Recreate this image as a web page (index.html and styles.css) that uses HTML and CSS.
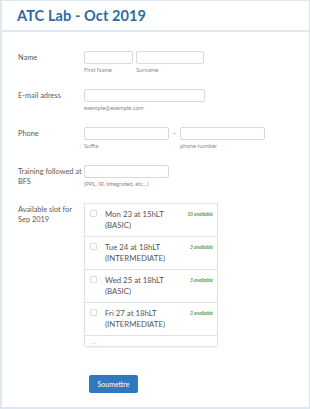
FILE: index.html
```html
<!DOCTYPE html>
<html>
<head>
<meta charset="utf-8">
<link rel="stylesheet" href="styles.css">
</head>
<body>
<div class="card">
  <header class="head"><h1 class="title">ATC Lab - Oct 2019</h1></header>
  <form class="form">
    <div class="row">
      <div class="label">Name</div>
      <div class="field">
        <div class="pair">
          <div class="sub-col"><div class="input w49"></div><div class="hint">First Name</div></div>
          <div class="sub-col"><div class="input w67"></div><div class="hint">Surname</div></div>
        </div>
      </div>
    </div>
    <div class="row">
      <div class="label">E-mail adress</div>
      <div class="field">
        <div class="input w121"></div>
        <div class="hint">exemple@exemple.com</div>
      </div>
    </div>
    <div class="row">
      <div class="label">Phone</div>
      <div class="field">
        <div class="pair">
          <div class="sub-col"><div class="input w85"></div><div class="hint">Suffix</div></div>
          <div class="dash">-</div>
          <div class="sub-col"><div class="input w85"></div><div class="hint">phone number</div></div>
        </div>
      </div>
    </div>
    <div class="row">
      <div class="label">Training followed at BFS</div>
      <div class="field">
        <div class="input w85"></div>
        <div class="hint">(PPL, IR, Integrated, etc...)</div>
      </div>
    </div>
    <div class="row">
      <div class="label">Available slot for Sep 2019</div>
      <div class="field">
        <div class="slots-wrap">
          <div class="slots">
            <div class="slot"><span class="box"></span><span class="slot-text">Mon 23 at 15hLT<br>(BASIC)</span><span class="avail">10 available</span></div>
            <div class="slot"><span class="box"></span><span class="slot-text">Tue 24 at 18hLT<br>(INTERMEDIATE)</span><span class="avail">3 available</span></div>
            <div class="slot"><span class="box"></span><span class="slot-text">Wed 25 at 18hLT<br>(BASIC)</span><span class="avail">3 available</span></div>
            <div class="slot"><span class="box"></span><span class="slot-text">Fri 27 at 18hLT<br>(INTERMEDIATE)</span><span class="avail">3 available</span></div>
            <div class="slot slot-last"><span class="box"></span><span class="slot-text"></span><span class="avail">4 available</span></div>
          </div>
        </div>
      </div>
    </div>
    <div class="actions">
      <button type="button" class="submit">Soumettre</button>
    </div>
  </form>
</div>
</body>
</html>
```
FILE: styles.css
```css
html, body {
  margin: 0;
  padding: 0;
}
body {
  background: #dfe8f1;
  font-family: Lato, "Open Sans", sans-serif;
  height: 409px;
  overflow: hidden;
  padding: 1px 1px 2px 2px;
  box-sizing: border-box;
}
.card {
  background: #fff;
  height: 406px;
  box-sizing: border-box;
}
.head {
  height: 29px;
  border-bottom: 2px solid #dde7f1;
  padding-left: 15px;
  display: flex;
  align-items: center;
}
.title {
  margin: 0;
  font-size: 14.5px;
  font-weight: 700;
  color: #2e6ba6;
  letter-spacing: 0.1px;
}
.form {
  padding: 19px 0 0 16px;
}
.row {
  display: flex;
  margin-bottom: 14px;
}
.label {
  width: 66px;
  flex: none;
  font-size: 7.4px;
  line-height: 9.5px;
  color: #5c5c5c;
  padding-top: 2px;
}
.field {
  flex: none;
}
.pair {
  display: flex;
  align-items: flex-start;
  gap: 3px;
}
.input {
  height: 13px;
  box-sizing: border-box;
  border: 1px solid #d9d9d9;
  border-radius: 2px;
  background: #fff;
}
.w49 { width: 49px; }
.w67 { width: 68px; }
.w85 { width: 85px; }
.w121 { width: 121px; }
.dash {
  width: 5px;
  font-size: 7px;
  line-height: 13px;
  color: #888;
  text-align: center;
}
.hint {
  font-size: 5.8px;
  line-height: 7px;
  color: #8a8a8a;
  margin-top: 2px;
  height: 9px;
}
.slots-wrap {
  position: relative;
  width: 134px;
  box-shadow: 0 2px 2px -1px rgba(0,0,0,0.15);
}
.slots-wrap::after {
  content: "";
  position: absolute;
  left: 1px;
  right: 1px;
  bottom: 0;
  height: 4px;
  background: linear-gradient(rgba(255,255,255,0), rgba(255,255,255,0.9));
}
.slots {
  height: 143px;
  box-sizing: border-box;
  border: 1px solid #e2e2e2;
  border-bottom: none;
  overflow: hidden;
}
.slot {
  display: flex;
  align-items: flex-start;
  height: 33px;
  box-sizing: border-box;
  border-bottom: 1px solid #e2e2e2;
  padding: 5px 4px 0 5px;
}
.slot-last {
  padding-top: 6px;
}
.box {
  width: 7px;
  height: 7px;
  box-sizing: border-box;
  border: 1px solid #dcdcdc;
  border-radius: 1px;
  flex: none;
  margin-top: 1px;
}
.slot-text {
  margin-left: 8px;
  font-size: 7.8px;
  line-height: 11px;
  color: #555;
  flex: 1;
}
.avail {
  font-size: 5px;
  line-height: 11px;
  font-style: italic;
  font-weight: 700;
  color: #5d9c44;
  white-space: nowrap;
}
.slot-last .avail {
  line-height: 9px;
  margin-top: 2px;
}
.actions {
  padding: 11px 0 0 71px;
}
.submit {
  width: 49px;
  height: 18px;
  border: none;
  border-radius: 2px;
  background: #2f79be;
  color: #fff;
  font-family: Lato, "Open Sans", sans-serif;
  font-size: 7px;
  padding: 0;
  margin: 0;
}
```
